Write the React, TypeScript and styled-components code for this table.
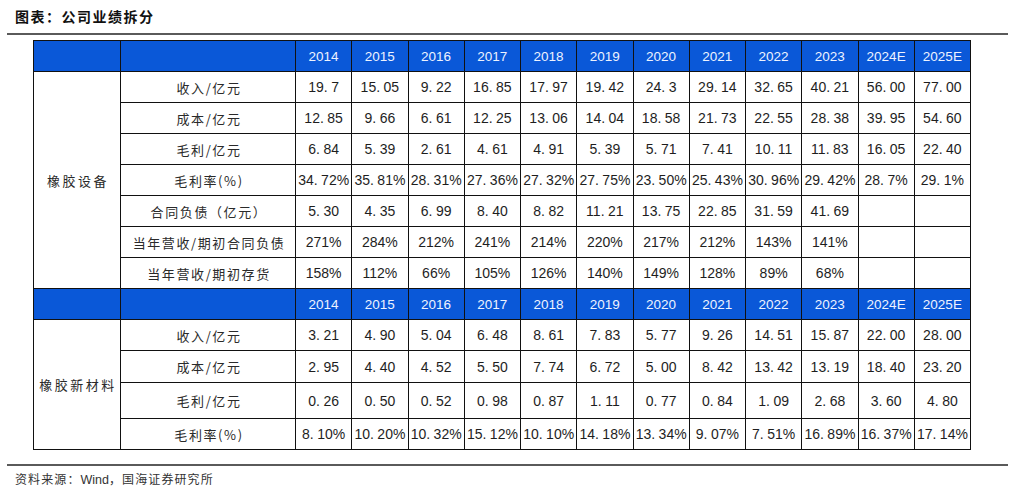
import React from "react"
import styled, { createGlobalStyle } from "styled-components"

const GlobalStyle = createGlobalStyle`
  html, body {
    margin: 0;
    padding: 0;
    background: #ffffff;
  }
  body {
    font-family: "Liberation Sans", "Noto Sans CJK SC", sans-serif;
    color: #222222;
  }
`

const Page = styled.div`
  width: 1021px;
  height: 491px;
  display: flex;
  flex-direction: column;
  overflow: hidden;
`

const Title = styled.div`
  height: 33px;
  padding-left: 15px;
  display: flex;
  align-items: center;
  font-family: "Noto Sans CJK SC", sans-serif;
  font-weight: 700;
  font-size: 14px;
  letter-spacing: 1.5px;
  color: #111111;
  box-sizing: border-box;
  padding-bottom: 2px;
`

const Rule = styled.div`
  margin: 0 13px 0 7px;
  height: 2px;
  background: #5a5a5a;
`

const Table = styled.table`
  margin: 5px 0 0 33px;
  border-collapse: collapse;
  table-layout: fixed;
  width: 937px;
`

const Row = styled.tr<{ $h: number }>`
  height: ${(p) => p.$h}px;
`

const HeadCell = styled.td`
  background: #0a58d8;
  border: 1px solid #111111;
  color: #eef3ff;
  font-family: "Liberation Sans", sans-serif;
  font-size: 13.5px;
  text-align: center;
  padding: 0;
`

const GroupCell = styled.td`
  border: 1px solid #111111;
  font-family: "Noto Sans CJK SC", sans-serif;
  font-size: 13px;
  letter-spacing: 2.5px;
  text-align: center;
  padding: 0 0 0 2px;
  color: #2a2a2a;
`

const LabelCell = styled.td`
  border: 1px solid #111111;
  font-family: "Noto Sans CJK SC", sans-serif;
  font-size: 13px;
  letter-spacing: 1.6px;
  text-align: center;
  padding: 0 0 0 2px;
  color: #2a2a2a;
`

const NumCell = styled.td`
  border: 1px solid #111111;
  font-family: "Liberation Sans", sans-serif;
  font-size: 14px;
  text-align: center;
  padding: 0;
  color: #1e1e1e;
  white-space: nowrap;
`

const Dot = styled.span`
  margin-right: 3.5px;
`

const Footer = styled.div`
  margin: 14px 13px 0 7px;
  height: 2px;
  background: #5a5a5a;
`

const Source = styled.div`
  padding: 4px 0 0 15px;
  font-family: "Noto Sans CJK SC", sans-serif;
  font-size: 12px;
  letter-spacing: 1.1px;
  color: #333333;
`

const SourceLatin = styled.span`
  font-family: "Liberation Sans", sans-serif;
  font-size: 12.5px;
  letter-spacing: 0;
`

const years = ["2014", "2015", "2016", "2017", "2018", "2019", "2020", "2021", "2022", "2023", "2024E", "2025E"]

type Line = { label: string; values: string[]; h: number }

const equipment: Line[] = [
  { label: "收入/亿元", h: 31, values: ["19.7", "15.05", "9.22", "16.85", "17.97", "19.42", "24.3", "29.14", "32.65", "40.21", "56.00", "77.00"] },
  { label: "成本/亿元", h: 31, values: ["12.85", "9.66", "6.61", "12.25", "13.06", "14.04", "18.58", "21.73", "22.55", "28.38", "39.95", "54.60"] },
  { label: "毛利/亿元", h: 31, values: ["6.84", "5.39", "2.61", "4.61", "4.91", "5.39", "5.71", "7.41", "10.11", "11.83", "16.05", "22.40"] },
  { label: "毛利率(%)", h: 31, values: ["34.72%", "35.81%", "28.31%", "27.36%", "27.32%", "27.75%", "23.50%", "25.43%", "30.96%", "29.42%", "28.7%", "29.1%"] },
  { label: "合同负债（亿元）", h: 31, values: ["5.30", "4.35", "6.99", "8.40", "8.82", "11.21", "13.75", "22.85", "31.59", "41.69", "", ""] },
  { label: "当年营收/期初合同负债", h: 31, values: ["271%", "284%", "212%", "241%", "214%", "220%", "217%", "212%", "143%", "141%", "", ""] },
  { label: "当年营收/期初存货", h: 31, values: ["158%", "112%", "66%", "105%", "126%", "140%", "149%", "128%", "89%", "68%", "", ""] },
]

const materials: Line[] = [
  { label: "收入/亿元", h: 31, values: ["3.21", "4.90", "5.04", "6.48", "8.61", "7.83", "5.77", "9.26", "14.51", "15.87", "22.00", "28.00"] },
  { label: "成本/亿元", h: 32, values: ["2.95", "4.40", "4.52", "5.50", "7.74", "6.72", "5.00", "8.42", "13.42", "13.19", "18.40", "23.20"] },
  { label: "毛利/亿元", h: 36, values: ["0.26", "0.50", "0.52", "0.98", "0.87", "1.11", "0.77", "0.84", "1.09", "2.68", "3.60", "4.80"] },
  { label: "毛利率(%)", h: 31, values: ["8.10%", "10.20%", "10.32%", "15.12%", "10.10%", "14.18%", "13.34%", "9.07%", "7.51%", "16.89%", "16.37%", "17.14%"] },
]

function Num({ value }: { value: string }) {
  const i = value.indexOf(".")
  if (i < 0) return <>{value}</>
  return (
    <>
      {value.slice(0, i)}
      <Dot>.</Dot>
      {value.slice(i + 1)}
    </>
  )
}

function HeaderRow() {
  return (
    <Row $h={31}>
      <HeadCell />
      <HeadCell />
      {years.map((y) => (
        <HeadCell key={y}>{y}</HeadCell>
      ))}
    </Row>
  )
}

function Group({ name, lines }: { name: string; lines: Line[] }) {
  return (
    <>
      {lines.map((line, i) => (
        <Row $h={line.h} key={line.label}>
          {i === 0 && <GroupCell rowSpan={lines.length}>{name}</GroupCell>}
          <LabelCell>{line.label}</LabelCell>
          {line.values.map((v, j) => (
            <NumCell key={j}>
              <Num value={v} />
            </NumCell>
          ))}
        </Row>
      ))}
    </>
  )
}

export default function App() {
  return (
    <Page>
      <GlobalStyle />
      <Title>图表：公司业绩拆分</Title>
      <Rule />
      <Table>
        <colgroup>
          <col style={{ width: 87 }} />
          <col style={{ width: 175 }} />
          {years.map((y) => (
            <col key={y} style={{ width: 56.25 }} />
          ))}
        </colgroup>
        <tbody>
          <HeaderRow />
          <Group name="橡胶设备" lines={equipment} />
          <HeaderRow />
          <Group name="橡胶新材料" lines={materials} />
        </tbody>
      </Table>
      <Footer />
      <Source>
        资料来源：<SourceLatin>Wind</SourceLatin>，国海证券研究所
      </Source>
    </Page>
  )
}
